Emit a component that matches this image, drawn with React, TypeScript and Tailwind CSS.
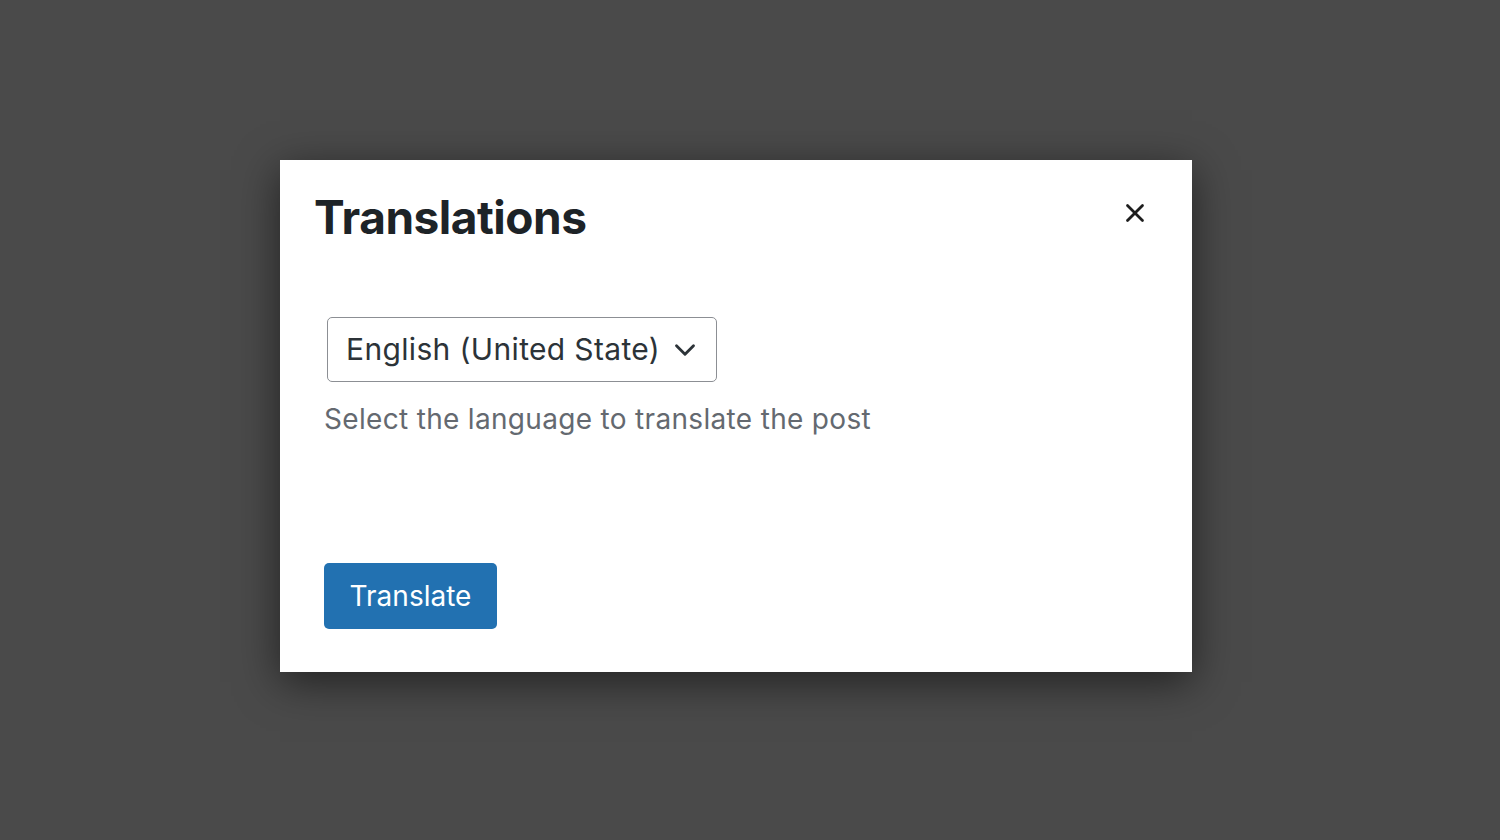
import { X, ChevronDown } from "lucide-react";

export default function App() {
  return (
    <div className="w-[1500px] h-[840px] bg-[#4a4a4a] flex items-start justify-start font-['Inter',sans-serif]">
      <div className="ml-[280px] mt-[160px] w-[912px] h-[512px] bg-white shadow-[0_10px_40px_rgba(0,0,0,0.55)] flex flex-col">
        {/* Header */}
        <div className="flex items-center justify-between pl-[34px] pr-[42px] pt-[29px]">
          <h1 className="text-[46px] font-bold text-[#1d2327] tracking-[-0.5px] leading-[56px]">
            Translations
          </h1>
          <button className="text-[#1e1e1e] -mt-[8px]">
            <X size={30} strokeWidth={2.2} />
          </button>
        </div>

        {/* Body */}
        <div className="pl-[44px] pt-[72px] flex flex-col">
          <div className="ml-[3px] w-[390px] h-[65px] border-[1.5px] border-[#8c8f94] rounded-[5px] flex items-center justify-between pl-[18px] pr-[14px]">
            <span className="text-[30px] tracking-[0.35px] text-[#2c3338]">English (United State)</span>
            <ChevronDown size={34} strokeWidth={2} className="text-[#2c3338]" />
          </div>
          <p className="mt-[16px] text-[28px] tracking-[0.32px] text-[#646970]">
            Select the language to translate the post
          </p>
          <button className="mt-[123px] w-[173px] h-[66px] bg-[#2271b1] rounded-[5px] text-white text-[28px] flex items-center justify-center">
            Translate
          </button>
        </div>
      </div>
    </div>
  );
}
